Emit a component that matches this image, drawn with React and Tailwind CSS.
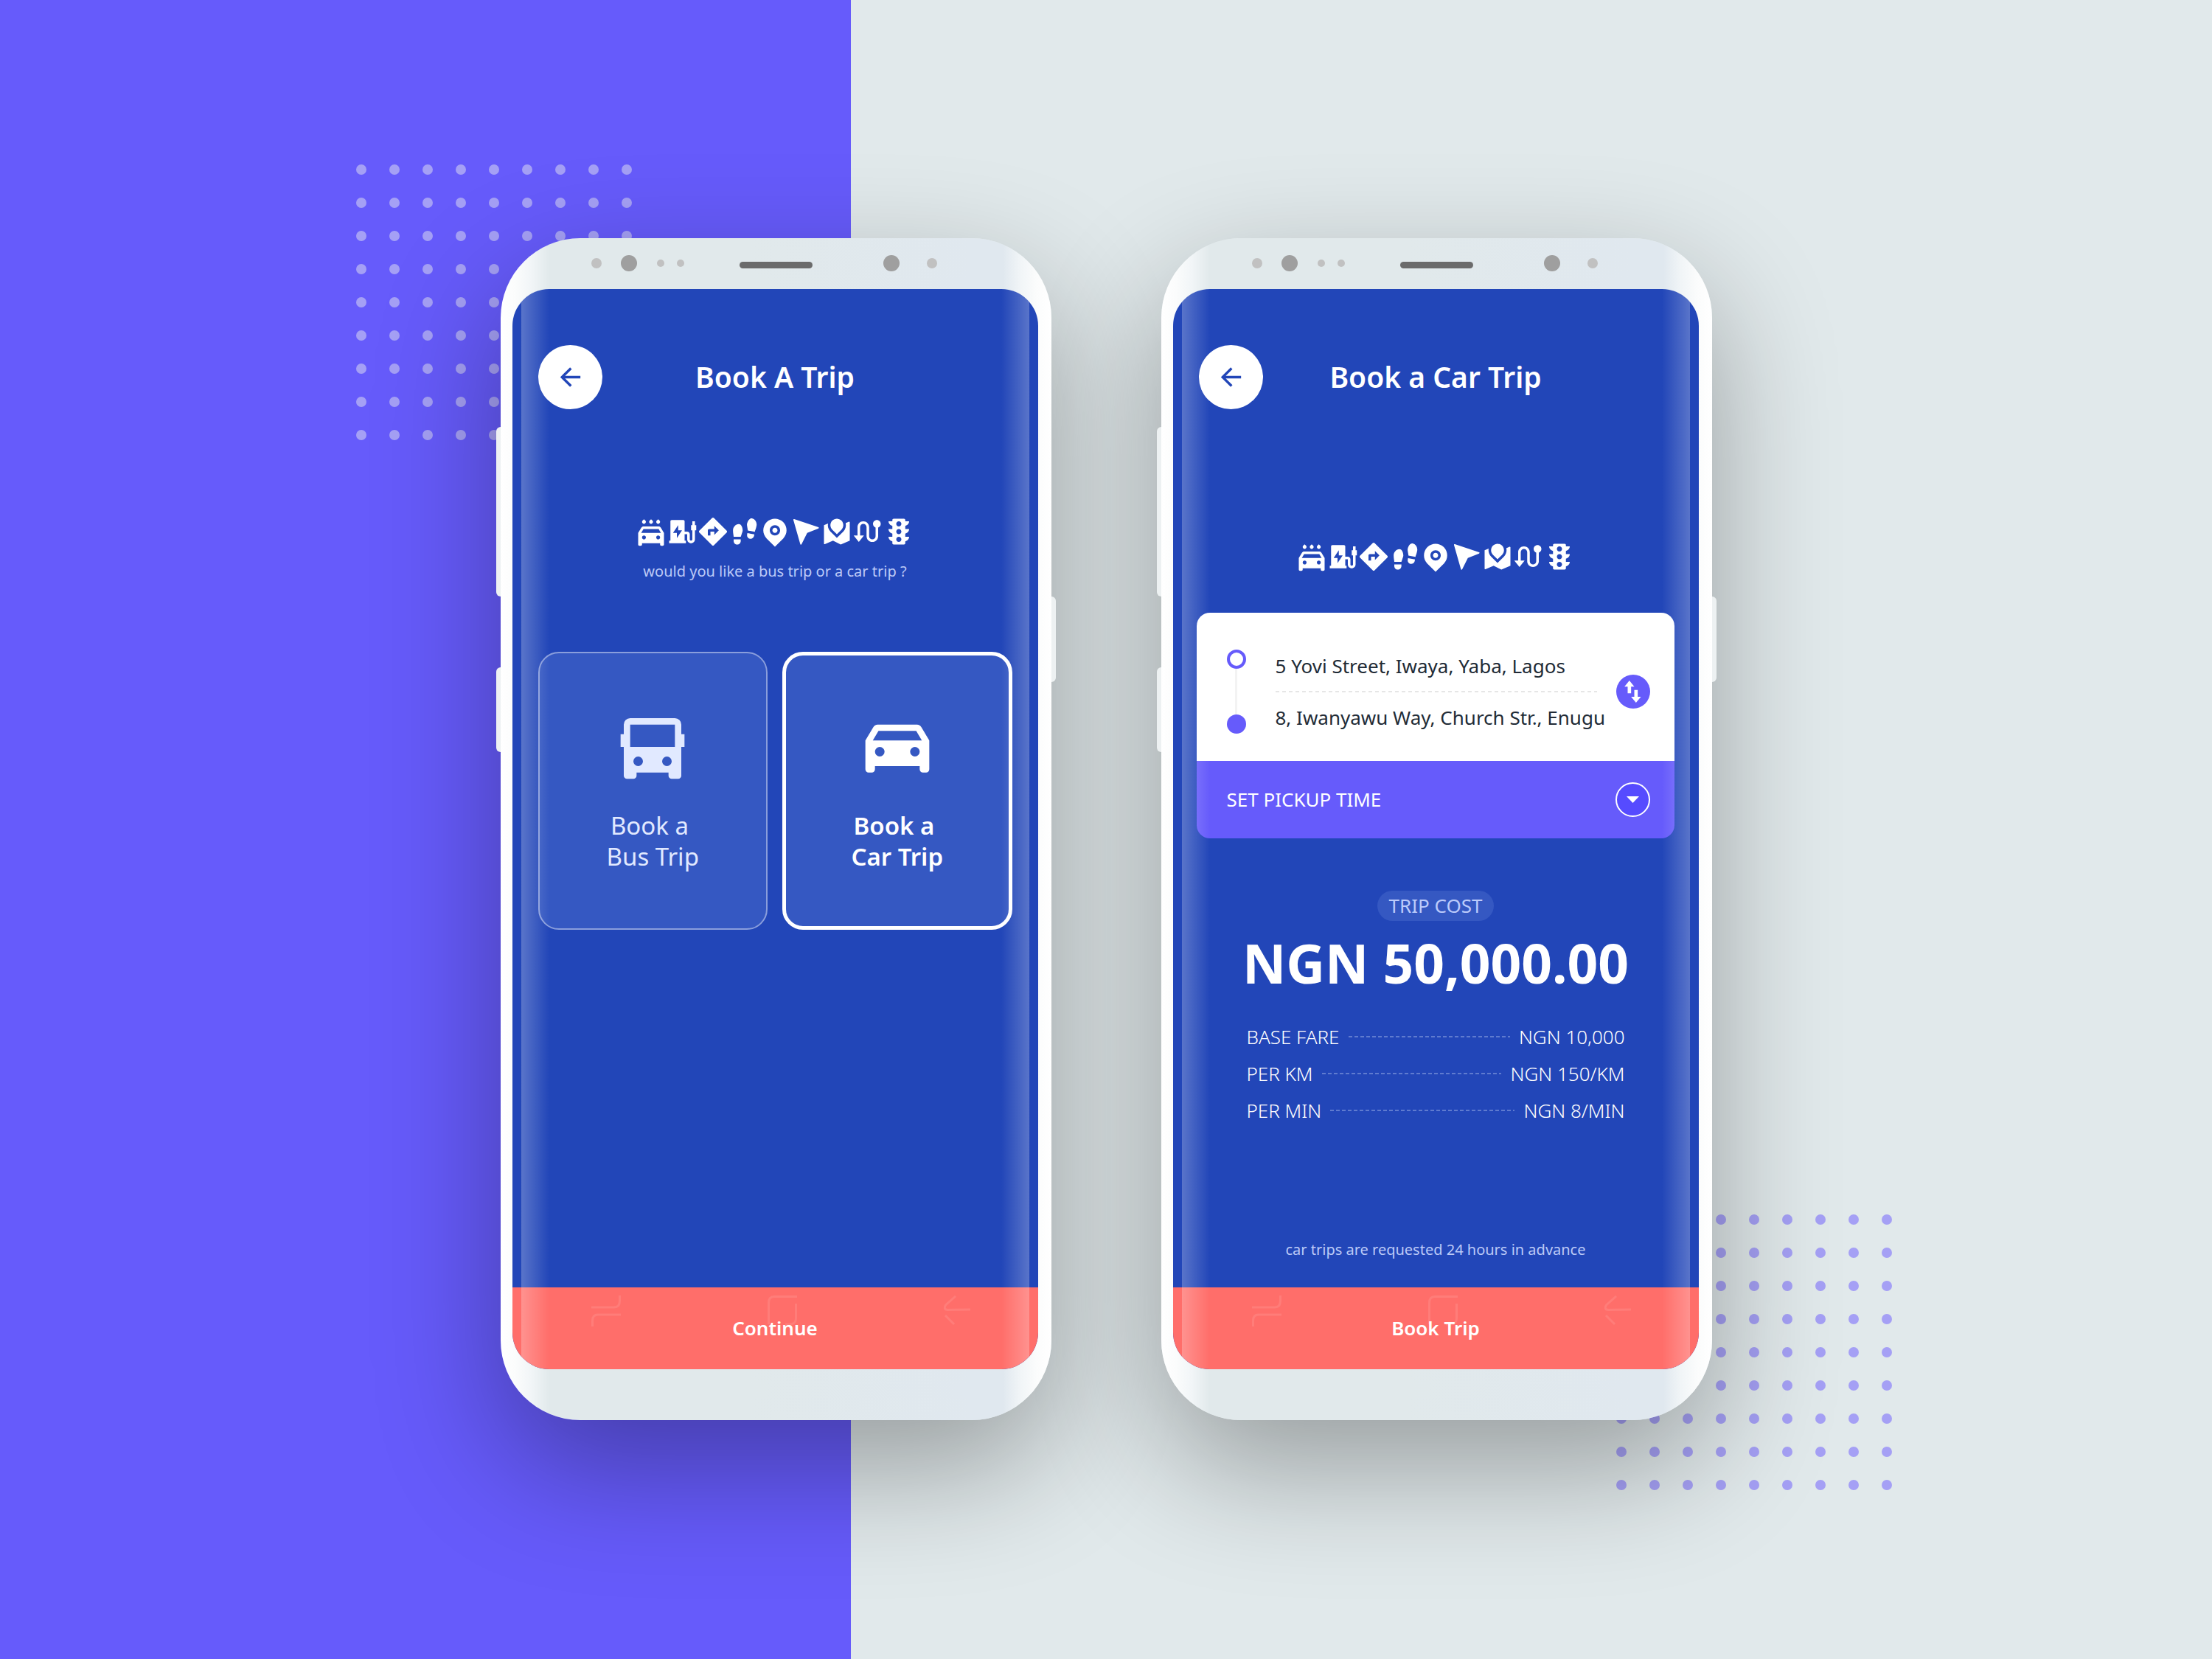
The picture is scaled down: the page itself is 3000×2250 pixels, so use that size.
import {
  RiArrowLeftLine,
  RiCarWashingFill,
  RiChargingPile2Fill,
  RiDirectionFill,
  RiFootprintFill,
  RiMapPinFill,
  RiNavigationFill,
  RiRoadMapFill,
  RiRouteFill,
  RiTrafficLightFill,
} from "react-icons/ri";

const tripIcons = [
  RiCarWashingFill,
  RiChargingPile2Fill,
  RiDirectionFill,
  RiFootprintFill,
  RiMapPinFill,
  RiNavigationFill,
  RiRoadMapFill,
  RiRouteFill,
  RiTrafficLightFill,
];

const fares = [
  { label: "BASE FARE", price: "NGN 10,000" },
  { label: "PER KM", price: "NGN 150/KM" },
  { label: "PER MIN", price: "NGN 8/MIN" },
];

function BusIcon({ className }) {
  return (
    <svg className={className} viewBox="0 0 24 24" fill="currentColor" fillRule="evenodd" aria-hidden="true">
      <path d="M17 20H7V21A1 1 0 0 1 6 22H4A1 1 0 0 1 3 21V12H2V8H3V5A2 2 0 0 1 5 3H19A2 2 0 0 1 21 5V8H22V12H21V21A1 1 0 0 1 20 22H18A1 1 0 0 1 17 21ZM5 5V12H19V5ZM7.500 18A1.500 1.500 0 1 0 7.500 15A1.500 1.500 0 0 0 7.500 18ZM16.500 18A1.500 1.500 0 1 0 16.500 15A1.500 1.500 0 0 0 16.500 18Z" />
    </svg>
  );
}

function CarIcon({ className }) {
  return (
    <svg className={className} viewBox="0 0 24 24" fill="currentColor" fillRule="evenodd" aria-hidden="true">
      <path d="M19 18H5V19A1 1 0 0 1 4 20H3A1 1 0 0 1 2 19V10L4.480 5.800A1.600 1.600 0 0 1 5.860 5H18.140A1.600 1.600 0 0 1 19.520 5.800L22 10V19A1 1 0 0 1 21 20H20A1 1 0 0 1 19 19ZM4.320 10H19.680L17.900 7H6.100ZM6.500 15A1.500 1.500 0 1 0 6.500 12A1.500 1.500 0 0 0 6.500 15ZM17.500 15A1.500 1.500 0 1 0 17.500 12A1.500 1.500 0 0 0 17.500 15Z" />
    </svg>
  );
}

function DotGrid({ className }) {
  return (
    <div aria-hidden="true" className={`absolute -z-20 grid grid-cols-9 gap-[31px] ${className}`}>
      {Array.from({ length: 81 }, (_, i) => (
        <span key={i} className="size-[14px] rounded-full bg-[#a5a0f5]" />
      ))}
    </div>
  );
}

function Sensors() {
  return (
    <div aria-hidden="true" className="flex h-[69px] items-center pl-[107px]">
      <span className="size-[14px] rounded-full bg-[#c1c1c1]" />
      <span className="ml-[26px] size-[22px] rounded-full bg-[#9f9f9f]" />
      <span className="ml-[27px] size-[10px] rounded-full bg-[#c1c1c1]" />
      <span className="ml-[17px] size-[10px] rounded-full bg-[#c1c1c1]" />
      <span className="mt-1 ml-[75px] h-[9px] w-[99px] rounded-full bg-[#6b6b6b]" />
      <span className="ml-[96px] size-[22px] rounded-full bg-[#9f9f9f]" />
      <span className="ml-[37px] size-[14px] rounded-full bg-[#c1c1c1]" />
    </div>
  );
}

function NavHints() {
  return (
    <div
      aria-hidden="true"
      className="pointer-events-none absolute inset-x-0 top-[11px] flex justify-between pr-[92px] pl-[107px] text-white/10"
    >
      <svg className="h-[42px] w-10" viewBox="0 0 40 42" fill="none" stroke="currentColor" strokeWidth="3">
        <path d="M38.500 0V7Q38.500 16 31 16H0M1.500 42V34Q1.500 26 9 26H40" />
      </svg>
      <svg className="h-[42px] w-10" viewBox="0 0 40 42" fill="none" stroke="currentColor" strokeWidth="3">
        <path d="M40 1.500H9Q1.500 1.500 1.500 10V39M38.500 11V31Q38.500 39 30 39H24" />
      </svg>
      <svg className="h-[42px] w-9" viewBox="0 0 36 42" fill="none" stroke="currentColor" strokeWidth="3">
        <path d="M16 1L2.500 13Q-1 19 5 19.500L36 19M2 27L14 39" />
      </svg>
    </div>
  );
}

function Phone({ title, action, children }) {
  return (
    <section className="relative w-[747px]">
      <div className="absolute inset-0 -z-10 rounded-[108px] shadow-[0_64px_170px_rgba(0,0,0,0.33)]" />
      <div className="absolute top-[256px] -left-[6px] h-[230px] w-3 rounded-l-[6px] bg-[#edf1f2]" />
      <div className="absolute top-[582px] -left-[6px] h-[115px] w-3 rounded-l-[6px] bg-[#edf1f2]" />
      <div className="absolute top-[486px] -right-[6px] h-[116px] w-3 rounded-r-[6px] bg-[#edf1f2]" />
      <div className="relative rounded-[108px] bg-[linear-gradient(to_right,#fff,#fbfcfc_20px,#f1f5f7_42px,#e1e9eb_66px,#e1e9eb_45%,#e0e8ef_85%,#e0e8ef_calc(100%-66px),#f1f5f7_calc(100%-42px),#fbfcfc_calc(100%-20px),#fff)] pr-[18px] pb-[69px] pl-4">
        <Sensors />
        <div className="relative flex min-h-[1465px] flex-col overflow-hidden rounded-[50px] bg-[#2246b8]">
          <header className="grid grid-cols-[1fr_auto_1fr] items-center px-[35px] pt-[76px]">
            <button
              type="button"
              aria-label="Back"
              className="grid size-[87px] place-items-center rounded-full bg-white text-[41px] text-[#2246b8]"
            >
              <RiArrowLeftLine />
            </button>
            <h1 className="text-[39px] leading-[52px] font-semibold">{title}</h1>
          </header>
          {children}
          <div className="relative shrink-0">
            <button type="button" className="h-[111px] w-full bg-[#ff6e6a] text-[26px] font-semibold">
              {action}
            </button>
            <NavHints />
          </div>
          <div className="pointer-events-none absolute inset-y-0 left-3 w-[38px] bg-linear-to-r from-white/25 to-white/0" />
          <div className="pointer-events-none absolute inset-y-0 right-3 w-[38px] bg-linear-to-l from-white/25 to-white/0" />
        </div>
      </div>
    </section>
  );
}

function TripIcons({ className }) {
  return (
    <div aria-hidden="true" className={`flex justify-center text-[42px] ${className}`}>
      {tripIcons.map((Icon, i) => (
        <Icon key={i} />
      ))}
    </div>
  );
}

function TripOption({ icon: Icon, name, selected }) {
  return (
    <button
      type="button"
      aria-pressed={selected}
      className={`flex h-[377px] flex-col items-center justify-center gap-[34px] rounded-[28px] bg-[#3558c2] text-[33px] leading-[42px] ${
        selected ? "border-[5px] border-white font-semibold text-white" : "border-2 border-[#8a9edc] text-[#e1e9ff]"
      }`}
    >
      <Icon className="size-[104px]" />
      <span>
        Book a&nbsp;
        <br />
        {name}
      </span>
    </button>
  );
}

function BookTrip() {
  return (
    <Phone title="Book A Trip" action="Continue">
      <TripIcons className="mt-[145px]" />
      <p className="mt-[18px] text-center text-xl leading-[30px] text-[#bccaf7]">
        would you like a bus trip or a car trip ?
      </p>
      <div className="mt-[94px] mb-auto grid grid-cols-2 gap-5 px-[35px]">
        <TripOption icon={BusIcon} name="Bus Trip" selected={false} />
        <TripOption icon={CarIcon} name="Car Trip" selected />
      </div>
    </Phone>
  );
}

function RouteCard() {
  return (
    <div className="mr-[33px] ml-8 mt-[55px] overflow-hidden rounded-[18px]">
      <div className="flex h-[201px] items-center bg-white pr-[33px] pl-[41px] text-[26px] text-[#212b36]">
        <div aria-hidden="true" className="mt-[14px] flex flex-col items-center">
          <span className="size-[26px] rounded-full border-4 border-[#665bfb]" />
          <span className="h-[62px] w-[3px] bg-[#f3f3f3]" />
          <span className="size-[26px] rounded-full bg-[#665bfb]" />
        </div>
        <div className="mt-[14px] ml-10 min-w-0 flex-1">
          <input
            aria-label="Pickup address"
            defaultValue="5 Yovi Street, Iwaya, Yaba, Lagos"
            className="block h-[34px] w-full bg-transparent outline-none"
          />
          <div className="my-[17px] mr-[26px] h-[2px] bg-[repeating-linear-gradient(to_right,#e6e6e6_0_5px,transparent_5px_9px)]" />
          <input
            aria-label="Destination address"
            defaultValue="8, Iwanyawu Way, Church Str., Enugu"
            className="block h-[34px] w-full bg-transparent outline-none"
          />
        </div>
        <button
          type="button"
          aria-label="Swap addresses"
          className="mt-[14px] grid size-[46px] shrink-0 place-items-center rounded-full bg-[#665bfb] text-white"
        >
          <svg className="h-[30px] w-[23px]" viewBox="0 0 68 90" fill="currentColor">
            <path d="M20 0L40 25H27V52H13V25H0ZM47 90L27 66H40V38H54V66H67Z" />
          </svg>
        </button>
      </div>
      <button
        type="button"
        className="flex h-[105px] w-full items-center justify-between bg-[#665bfb] pr-[33px] pl-[41px] text-[26px]"
      >
        SET PICKUP TIME
        <span className="grid size-[47px] place-items-center rounded-full border-2 border-white bg-[#564bff]">
          <svg className="h-[9px] w-[17px]" viewBox="0 0 17 9" fill="currentColor">
            <path d="M0 0H17L8.500 9Z" />
          </svg>
        </span>
      </button>
    </div>
  );
}

function BookCarTrip() {
  return (
    <Phone title="Book a Car Trip" action="Book Trip">
      <TripIcons className="mt-[179px]" />
      <RouteCard />
      <div className="mt-[71px] flex flex-col items-center">
        <span className="rounded-full bg-[#3558c2] px-4 text-[26px] leading-[41px] text-[#bccbfb]">TRIP COST</span>
        <strong className="mt-[17px] text-[73px] leading-20 font-bold">NGN 50,000.00</strong>
      </div>
      <dl className="mx-[100px] mt-[35px] text-[26px] leading-[50px] font-light">
        {fares.map(({ label, price }) => (
          <div key={label} className="flex items-center gap-3">
            <dt>{label}</dt>
            <dd className="order-last">{price}</dd>
            <span
              aria-hidden="true"
              className="h-[2px] flex-1 bg-[repeating-linear-gradient(to_right,#5f7bcf_0_5px,transparent_5px_8px)]"
            />
          </div>
        ))}
      </dl>
      <p className="mt-auto mb-9 text-center text-xl leading-[30px] text-[#bccaf7]">
        car trips are requested 24 hours in advance
      </p>
    </Phone>
  );
}

export default function App() {
  return (
    <main className="relative isolate flex min-h-screen items-center justify-center overflow-hidden bg-[#e1e9eb] pb-0.5 font-['Noto_Sans',sans-serif] text-white">
      <div className="absolute inset-y-0 left-0 -z-30 w-[38.47%] bg-[#665bfb]" />
      <div className="relative flex gap-[149px]">
        <DotGrid className="-top-[100px] -left-[196px]" />
        <DotGrid className="-right-[244px] -bottom-[95px]" />
        <BookTrip />
        <BookCarTrip />
      </div>
    </main>
  );
}
